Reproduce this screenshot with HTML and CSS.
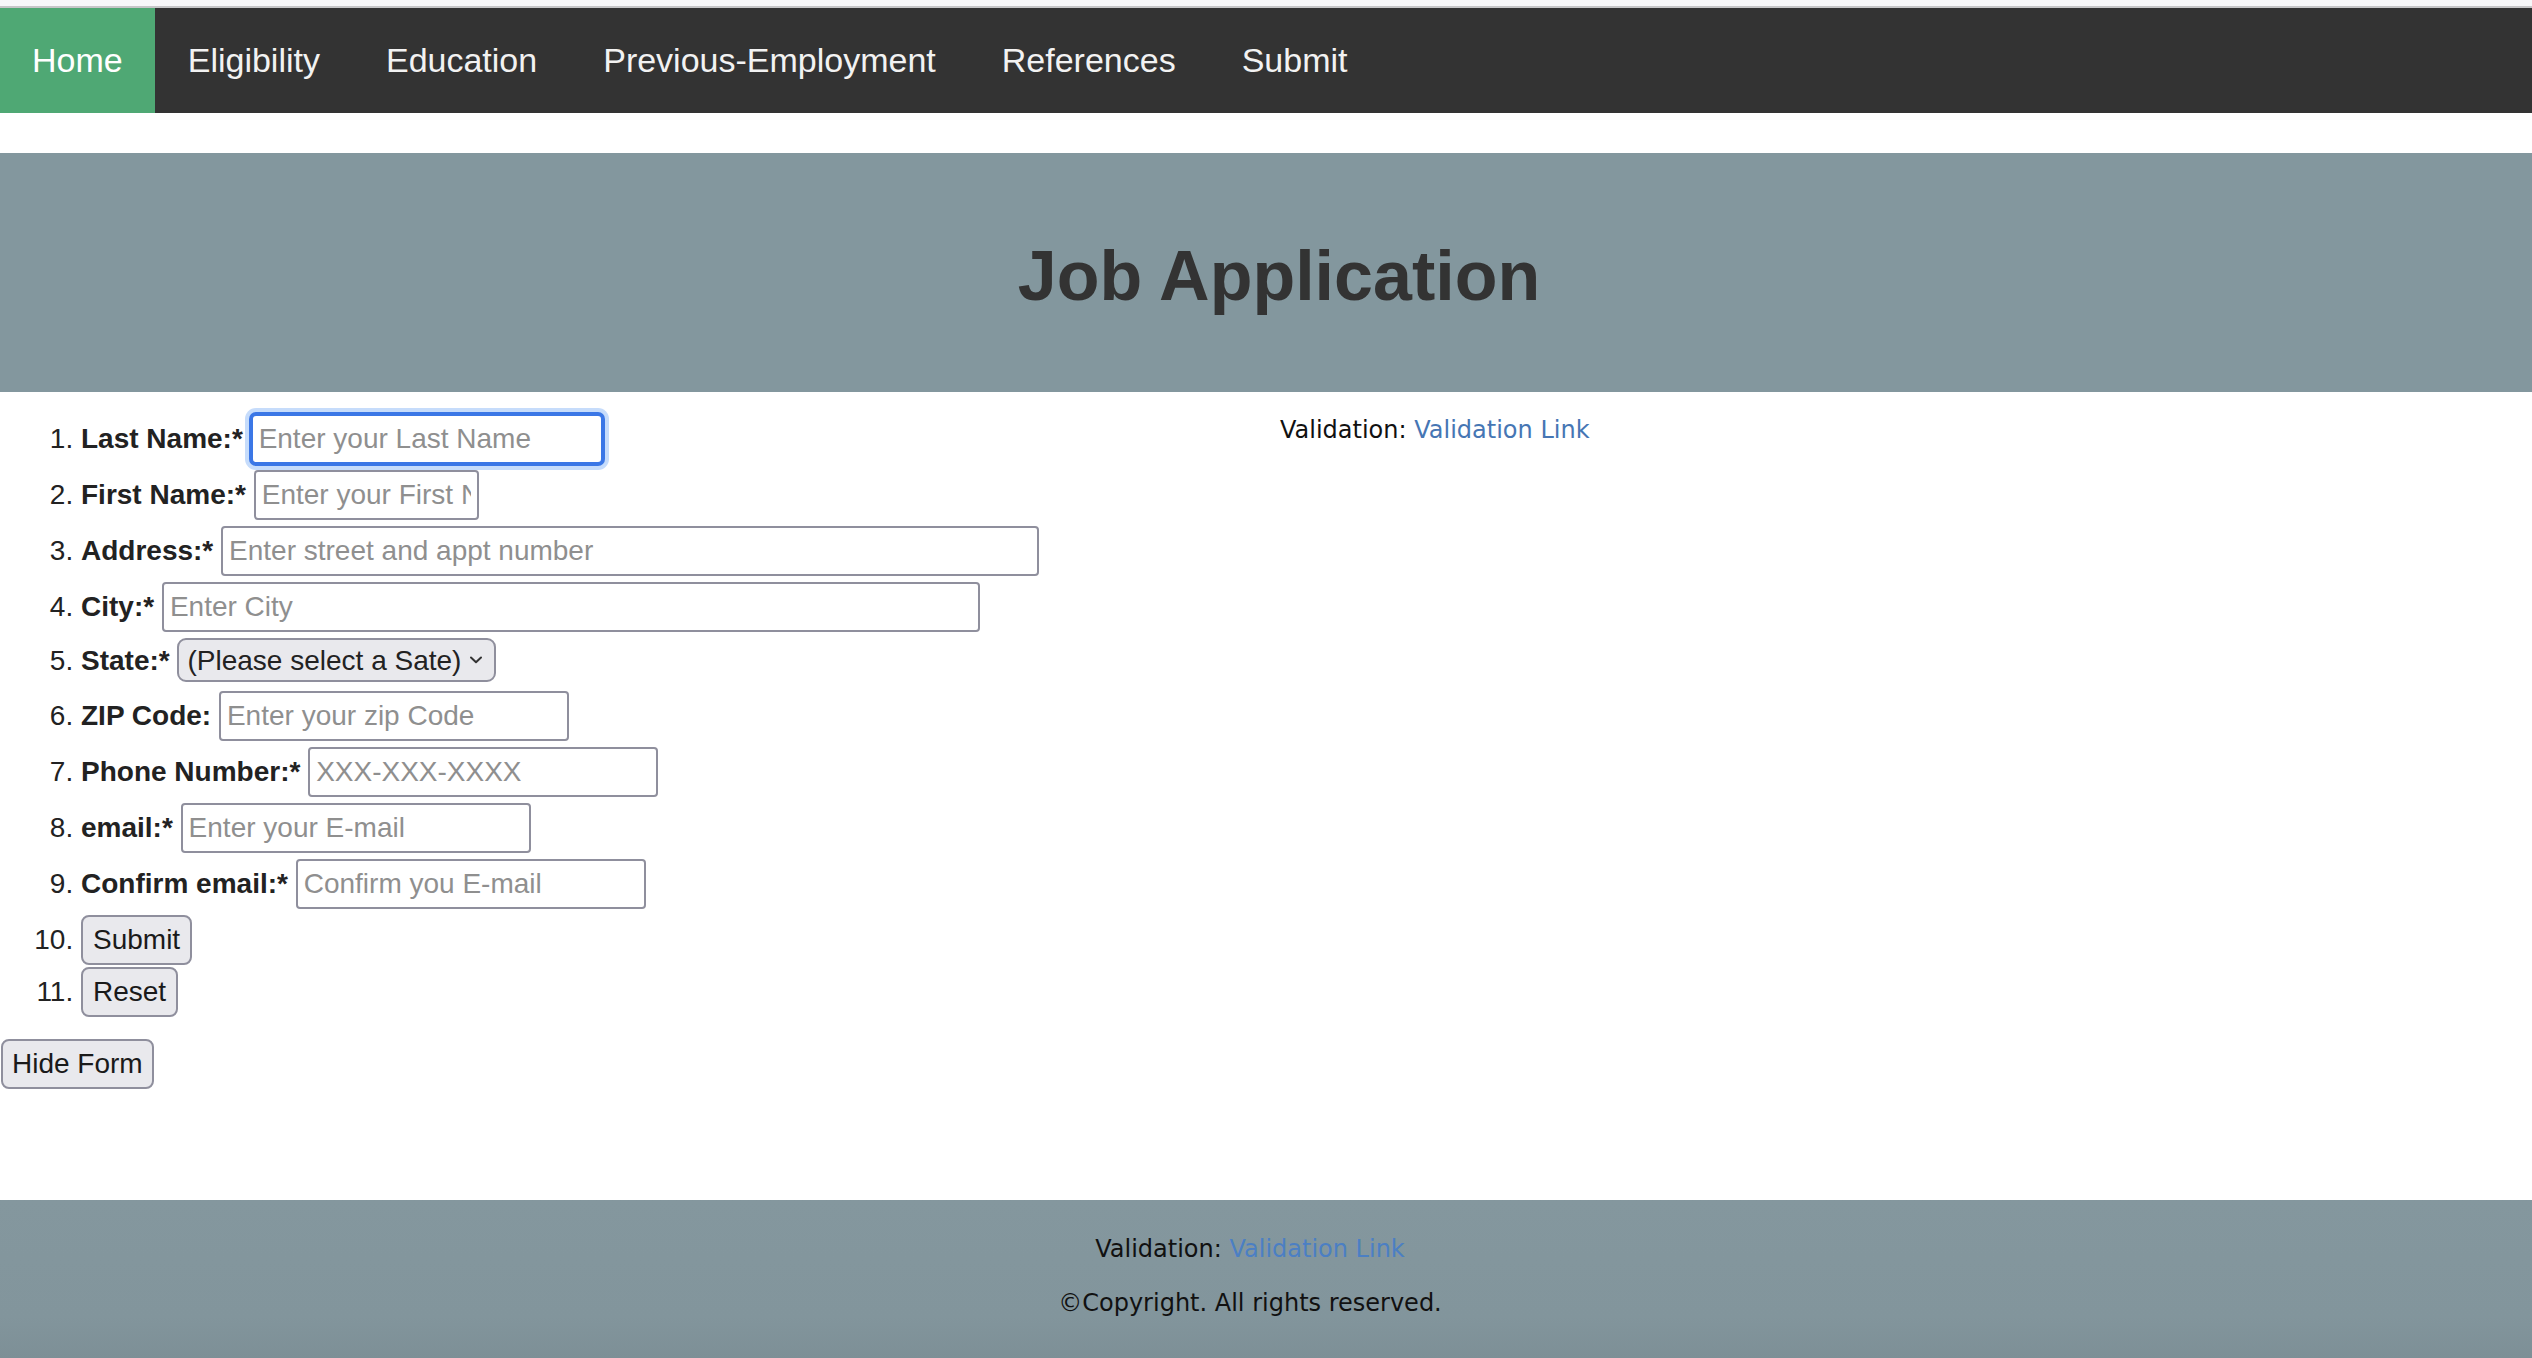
FILE: index.html
```html
<!DOCTYPE html>
<html lang="en">
<head>
<meta charset="utf-8">
<title>Job Application</title>
<link rel="stylesheet" href="styles.css">
</head>
<body>
<div class="topstrip"></div>
<nav class="topnav">
  <a class="active" href="#">Home</a>
  <a href="#">Eligibility</a>
  <a href="#">Education</a>
  <a href="#">Previous-Employment</a>
  <a href="#">References</a>
  <a href="#">Submit</a>
</nav>
<header class="banner">
  <h1>Job Application</h1>
</header>
<main class="content">
  <section class="form-col">
    <form class="app-form">
      <ol class="fields">
        <li class="row row-first"><label class="lbl">Last Name:*</label> <input class="field focused w-last" type="text" placeholder="Enter your Last Name"></li>
        <li class="row"><label class="lbl">First Name:*</label> <input class="field w-first" type="text" placeholder="Enter your First Name"></li>
        <li class="row"><label class="lbl">Address:*</label> <input class="field w-wide" type="text" placeholder="Enter street and appt number"></li>
        <li class="row"><label class="lbl">City:*</label> <input class="field w-wide" type="text" placeholder="Enter City"></li>
        <li class="row row-select"><label class="lbl">State:*</label> <span class="select-wrap"><select class="state"><option>(Please select a Sate)</option></select><svg class="chev" width="12" height="8" viewBox="0 0 12 8"><path d="M1 1.5 L6 6.2 L11 1.5" fill="none" stroke="#333" stroke-width="2" stroke-linecap="round" stroke-linejoin="round"/></svg></span></li>
        <li class="row"><label class="lbl">ZIP Code:</label> <input class="field w-std" type="text" placeholder="Enter your zip Code"></li>
        <li class="row"><label class="lbl">Phone Number:*</label> <input class="field w-std" type="text" placeholder="XXX-XXX-XXXX"></li>
        <li class="row"><label class="lbl">email:*</label> <input class="field w-std" type="text" placeholder="Enter your E-mail"></li>
        <li class="row"><label class="lbl">Confirm email:*</label> <input class="field w-std" type="text" placeholder="Confirm you E-mail"></li>
        <li class="row row-btn1"><button class="btn" type="button">Submit</button></li>
        <li class="row"><button class="btn" type="button">Reset</button></li>
      </ol>
    </form>
    <button class="btn hide-btn" type="button">Hide Form</button>
  </section>
  <aside class="side">
    <p class="valid">Validation: <a class="vlink" href="#">Validation Link</a></p>
  </aside>
</main>
<footer class="footer">
  <p class="valid">Validation: <a class="vlink footer-link" href="#">Validation Link</a></p>
  <p class="copy">&copy;Copyright. All rights reserved.</p>
</footer>
</body>
</html>
```

FILE: styles.css
```css
html, body {
  margin: 0;
  padding: 0;
  background: #ffffff;
}

body {
  font-family: "Liberation Sans", Arial, sans-serif;
  color: #222;
}

.topstrip {
  height: 6px;
  background: #f7f7f9;
  border-bottom: 2px solid #c6c6c8;
}

.topnav {
  display: flex;
  height: 105px;
  background: #333333;
}

.topnav a {
  display: block;
  padding: 0 32px;
  line-height: 105px;
  font-size: 34px;
  color: #f2f2f2;
  text-decoration: none;
}

.topnav a + a {
  padding: 0 33px;
}

.topnav a.active {
  background: #4fa874;
  color: #ffffff;
}

.banner {
  margin-top: 40px;
  height: 239px;
  background: #83979e;
  display: flex;
  align-items: center;
  justify-content: center;
  padding-left: 26px;
  padding-top: 7px;
  box-sizing: border-box;
}

.banner h1 {
  margin: 0;
  font-size: 70px;
  font-weight: bold;
  color: #333333;
}

.content {
  display: grid;
  grid-template-columns: 1280px 1fr;
}

.app-form {
  margin: 0;
}

.fields {
  margin: 0;
  padding: 22px 0 0 81px;
  font-size: 28px;
  color: #222;
}

.row {
  height: 50px;
  line-height: 50px;
  margin-bottom: 6px;
  white-space: nowrap;
}

.row-first {
  margin-bottom: 6px;
}

.row-select {
  height: 44px;
  line-height: 44px;
  margin-bottom: 9px;
}

.row-btn1 {
  margin-bottom: 2px;
}

.lbl {
  font-weight: bold;
}

.field {
  box-sizing: border-box;
  height: 50px;
  font-family: "Liberation Sans", Arial, sans-serif;
  font-size: 28px;
  color: #222;
  padding: 0 6px;
  border: 2px solid #8f8f9d;
  border-radius: 4px;
  background: #ffffff;
  vertical-align: baseline;
  outline: none;
}

.field::placeholder {
  color: #8f8f8f;
}

.field.focused {
  border-color: #3b77e6;
  border-radius: 5px;
  box-shadow: 0 0 0 2px #3b77e6, 0 0 0 6px #c6dcfb;
}

.w-last { width: 352px; }
.w-first { width: 225px; }
.w-wide { width: 818px; }
.w-std { width: 350px; }

.select-wrap {
  position: relative;
  display: inline-block;
  vertical-align: baseline;
}

.state {
  -webkit-appearance: none;
  appearance: none;
  box-sizing: border-box;
  width: 319px;
  height: 44px;
  font-family: "Liberation Sans", Arial, sans-serif;
  font-size: 28px;
  color: #222;
  padding: 0 16px 0 8px;
  background: #e9e9ed;
  border: 2px solid #8f8f9d;
  border-radius: 9px;
}

.chev {
  position: absolute;
  right: 14px;
  top: 18px;
  pointer-events: none;
}

.btn {
  box-sizing: border-box;
  height: 50px;
  font-family: "Liberation Sans", Arial, sans-serif;
  font-size: 28px;
  color: #1a1a1a;
  padding: 0 10px;
  background: #e9e9ed;
  border: 2px solid #8f8f9d;
  border-radius: 8px;
  vertical-align: baseline;
  white-space: nowrap;
}

.hide-btn {
  display: block;
  margin: 22px 0 0 1px;
  padding: 0 9px;
}

.side {
  padding-top: 24px;
}

.valid, .copy {
  margin: 0;
  font-family: "DejaVu Sans", Verdana, sans-serif;
  font-size: 24px;
  color: #111;
}

.vlink {
  color: #4676b4;
  text-decoration: none;
}

.footer {
  margin-top: 111px;
  background: linear-gradient(to bottom, #84979e 0%, #82959c 70%, #7c8e95 100%);
  padding: 35px 32px 50px 0;
  text-align: center;
}

.footer .copy {
  margin-top: 26px;
}

.footer-link {
  color: #4b7fc4;
}
```
